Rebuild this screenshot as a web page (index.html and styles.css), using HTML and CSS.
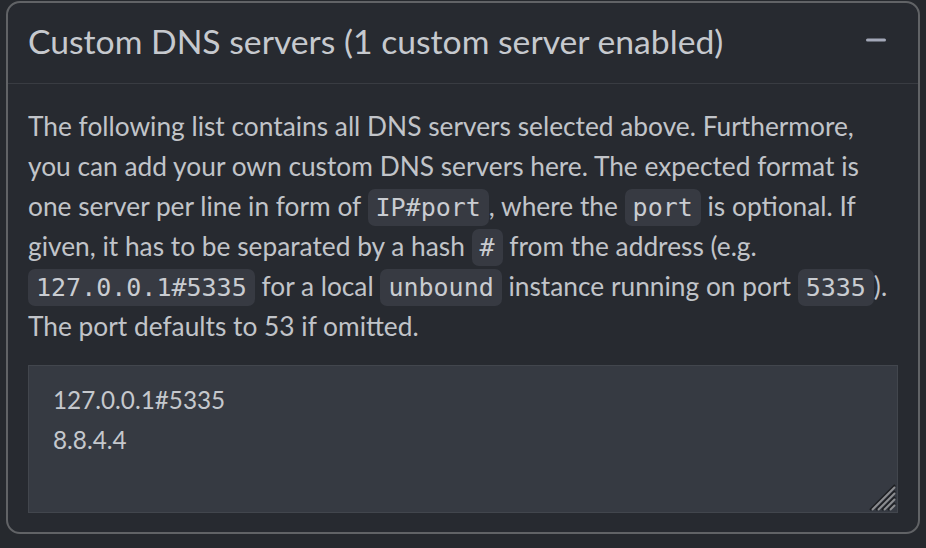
FILE: index.html
```html
<!DOCTYPE html>
<html lang="en">
<head>
<meta charset="utf-8">
<title>Custom DNS servers</title>
<link rel="stylesheet" href="styles.css">
</head>
<body>
<section class="card">
  <header class="card-header">
    <h3 class="card-title">Custom DNS servers (1 custom server enabled)</h3>
    <button class="collapse-btn" aria-label="Collapse">
      <svg width="20" height="4" viewBox="0 0 20 4"><rect x="0" y="0.5" width="20" height="3" rx="1.5" fill="currentColor"/></svg>
    </button>
  </header>
  <div class="card-body">
    <p class="help">The following list contains all DNS servers selected above. Furthermore,<br>
      you can add your own custom DNS servers here. The expected format is<br>
      one server per line in form of <code>IP#port</code>, where the <code>port</code> is optional. If<br>
      given, it has to be separated by a hash <code>#</code> from the address (e.g.<br>
      <code>127.0.0.1#5335</code> for a local <code>unbound</code> instance running on port <code>5335</code>).<br>
      The port defaults to 53 if omitted.</p>
    <div class="textarea-wrap">
      <textarea class="dns-input" spellcheck="false">127.0.0.1#5335
8.8.4.4</textarea>
      <svg class="grip" width="28" height="28" viewBox="0 0 28 28" aria-hidden="true">
        <g stroke-width="2" stroke-linecap="butt">
          <line x1="2" y1="27" x2="27" y2="2" stroke="#1c1d20"/>
          <line x1="4" y1="27" x2="27" y2="4" stroke="#8c8d90"/>
          <line x1="8" y1="27" x2="27" y2="8" stroke="#1c1d20"/>
          <line x1="10" y1="27" x2="27" y2="10" stroke="#8c8d90"/>
          <line x1="14" y1="27" x2="27" y2="14" stroke="#1c1d20"/>
          <line x1="16" y1="27" x2="27" y2="16" stroke="#8c8d90"/>
          <line x1="20" y1="27" x2="27" y2="20" stroke="#1c1d20"/>
          <line x1="22" y1="27" x2="27" y2="22" stroke="#8c8d90"/>
        </g>
      </svg>
    </div>
  </div>
</section>
</body>
</html>
```
FILE: styles.css
```css
* { box-sizing: border-box; }
html, body { height: 100%; }
body {
  margin: 0;
  padding: 1px 6px 0 6px;
  background: #26292e;
  font-family: "Lato", "Noto Sans", sans-serif;
  color: #c3c6cb;
}
.card {
  width: 914px;
  height: 533px;
  border: 2px solid #616366;
  border-radius: 14px;
  background: #272a30;
  display: flex;
  flex-direction: column;
}
.card-header {
  height: 81px;
  flex: none;
  display: flex;
  align-items: center;
  justify-content: space-between;
  padding: 0 32px 0 20px;
  border-bottom: 1px solid #393c42;
}
.card-title {
  margin: 0;
  font-size: 33.7px;
  font-weight: 400;
  color: #c6c9ce;
  line-height: 40px;
  padding-bottom: 4px;
}
.collapse-btn {
  background: none;
  border: 0;
  padding: 0;
  color: #a3a8b8;
  display: flex;
  margin-top: -6px;
}
.card-body {
  flex: 1;
  padding: 22px 20px 19px 20px;
  display: flex;
  flex-direction: column;
}
.help {
  margin: 0 0 19px 0;
  font-size: 26.3px;
  line-height: 40px;
  color: #c1c4c9;
  white-space: nowrap;
}
.help code {
  display: inline-block;
  font-family: "DejaVu Sans Mono", monospace;
  font-size: 25px;
  line-height: 29px;
  background: #373a42;
  color: #c9ccd1;
  padding: 4px 8px;
  border-radius: 7px;
}
.textarea-wrap {
  position: relative;
  flex: 1;
  display: flex;
}
.dns-input {
  flex: 1;
  resize: none;
  margin: 0;
  background: #363a42;
  border: 1px solid #42464d;
  border-radius: 0;
  color: #c5c8cd;
  font-family: "Lato", "Noto Sans", sans-serif;
  font-size: 24.3px;
  line-height: 40px;
  padding: 14px 24px;
  outline: none;
}
.grip {
  position: absolute;
  right: 2px;
  bottom: 2px;
}
```
